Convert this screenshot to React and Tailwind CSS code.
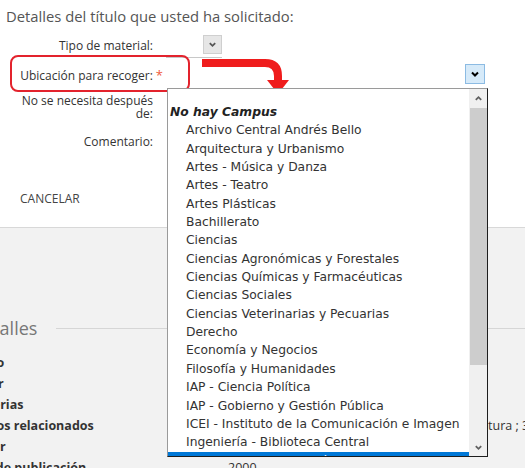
import { useState } from "react"

const campus = [
  "Archivo Central Andrés Bello",
  "Arquitectura y Urbanismo",
  "Artes - Música y Danza",
  "Artes - Teatro",
  "Artes Plásticas",
  "Bachillerato",
  "Ciencias",
  "Ciencias Agronómicas y Forestales",
  "Ciencias Químicas y Farmacéuticas",
  "Ciencias Sociales",
  "Ciencias Veterinarias y Pecuarias",
  "Derecho",
  "Economía y Negocios",
  "Filosofía y Humanidades",
  "IAP - Ciencia Política",
  "IAP - Gobierno y Gestión Pública",
  "ICEI - Instituto de la Comunicación e Imagen",
  "Ingeniería - Biblioteca Central",
  "Instituto de Asuntos Públicos",
]

const details = [
  { label: "Título", value: "" },
  { label: "Autor", value: "" },
  { label: "Materias", value: "" },
  { label: "Títulos relacionados", value: "Colección de Estudios de la crítica de la literatura ; 3" },
  { label: "Editor", value: "" },
  { label: "Año de publicación", value: "2000" },
]

function Chevron({ className, up }) {
  return (
    <svg viewBox="0 0 10 10" className={className} fill="none" stroke="currentColor" strokeWidth="2">
      <path d={up ? "M2 6.5 L5 3.5 L8 6.5" : "M2 3.5 L5 6.5 L8 3.5"} />
    </svg>
  )
}

export default function App() {
  const [selected] = useState(campus.length - 1)

  return (
    <div className="relative w-[525px] h-[468px] overflow-hidden bg-[#f2f2f2] font-['Open_Sans',sans-serif] text-[#333]">
      {/* formulario */}
      <div className="h-[228px] bg-white border-b border-[#d8d8d8]">
        <h2 className="pl-[6px] pt-[6px] text-[14.8px] leading-[20px] text-[#555]">
          Detalles del título que usted ha solicitado:
        </h2>

        <div className="mt-[9px] grid grid-cols-[153px_1fr] gap-x-[50px] text-[12px]">
          <div className="h-[22px] leading-[22px] text-right">Tipo de material:</div>
          <div className="h-[22px] flex items-center">
            <div className="-mt-[4px] w-[19px] h-[19px] bg-[#e6e6e6] border border-[#cfcfcf] flex items-center justify-center text-[#555]">
              <Chevron className="w-[9px] h-[9px]" />
            </div>
          </div>
          <div></div>
          <div className="-ml-[37px] w-[56px] border-b border-[#c8c8c8]"></div>

          <div className="h-[32px] leading-[34px] text-right whitespace-nowrap">
            Ubicación para recoger:<span className="ml-[3px] -mr-[10px] text-[13px] text-[#f05a3c]">*</span>
          </div>
          <div className="h-[32px] flex items-center justify-end pr-[40px]">
            <div className="w-[20px] h-[20px] bg-[#d6eaf9] border border-[#8cbbe3] flex items-center justify-center text-black">
              <Chevron className="w-[10px] h-[10px]" />
            </div>
          </div>

          <div className="mt-[4px] leading-[13px] text-right">
            No se necesita después
            <br />
            de:
          </div>
          <div></div>

          <div className="mt-[14px] leading-[16px] text-right">Comentario:</div>
          <div></div>
        </div>

        <div className="mt-[40px] pl-[20px] text-[12px] text-[#444]">CANCELAR</div>
      </div>

      {/* detalles */}
      <div className="pt-[88px]">
        <div className="flex items-center">
          <span className="-ml-[30px] text-[18px] leading-[24px] text-[#777]">Detalles</span>
          <div className="ml-[19px] flex-1 border-t border-[#d6d6d6]"></div>
        </div>
        <div className="mt-[13px] flex flex-col">
          {details.map((d) => (
            <div key={d.label} className="flex h-[21px] items-center text-[12.5px] whitespace-nowrap">
              <span className="-ml-[32px] w-[260px] shrink-0 font-bold">{d.label}</span>
              <span>{d.value}</span>
            </div>
          ))}
        </div>
      </div>

      {/* anotación */}
      <div className="absolute left-[10px] top-[55px] w-[180px] h-[37px] rounded-[8px] border-2 border-[#e3232d]"></div>
      <svg className="absolute left-[198px] top-[56px] w-[94px] h-[40px]" viewBox="198 56 94 40">
        <path d="M202 63 H265 Q278 63 278 76 V81" fill="none" stroke="#ef1c1c" strokeWidth="8" />
        <path d="M267 80 L289 80 L278 94 Z" fill="#ef1c1c" />
      </svg>

      {/* lista desplegada */}
      <div className="absolute left-[167px] top-[88px] w-[321px] h-[369px] flex bg-white border border-[#9a9a9a] border-r-[#1e1e1e] border-b-[#1e1e1e] font-['DejaVu_Sans',sans-serif] text-[12.3px] text-[#333]">
        <div className="flex-1 overflow-hidden pt-[14px]">
          <div className="pl-[2px] h-[18.35px] leading-[18px] font-bold italic text-[#222]">No hay Campus</div>
          {campus.map((c, i) => (
            <div
              key={c}
              className={`pl-[18px] h-[18.35px] leading-[18px] whitespace-nowrap ${i === selected ? "bg-[#0078d7] text-white" : ""}`}
            >
              {c}
            </div>
          ))}
        </div>
        <div className="w-[18px] bg-[#f0f0f0] flex flex-col items-center">
          <div className="h-[19px] flex items-center text-[#606060]">
            <Chevron className="w-[9px] h-[9px]" up />
          </div>
          <div className="w-[17px] h-[257px] bg-[#cdcdcd]"></div>
          <div className="flex-1"></div>
          <div className="h-[18px] flex items-center text-[#606060]">
            <Chevron className="w-[9px] h-[9px]" />
          </div>
        </div>
      </div>
    </div>
  )
}
